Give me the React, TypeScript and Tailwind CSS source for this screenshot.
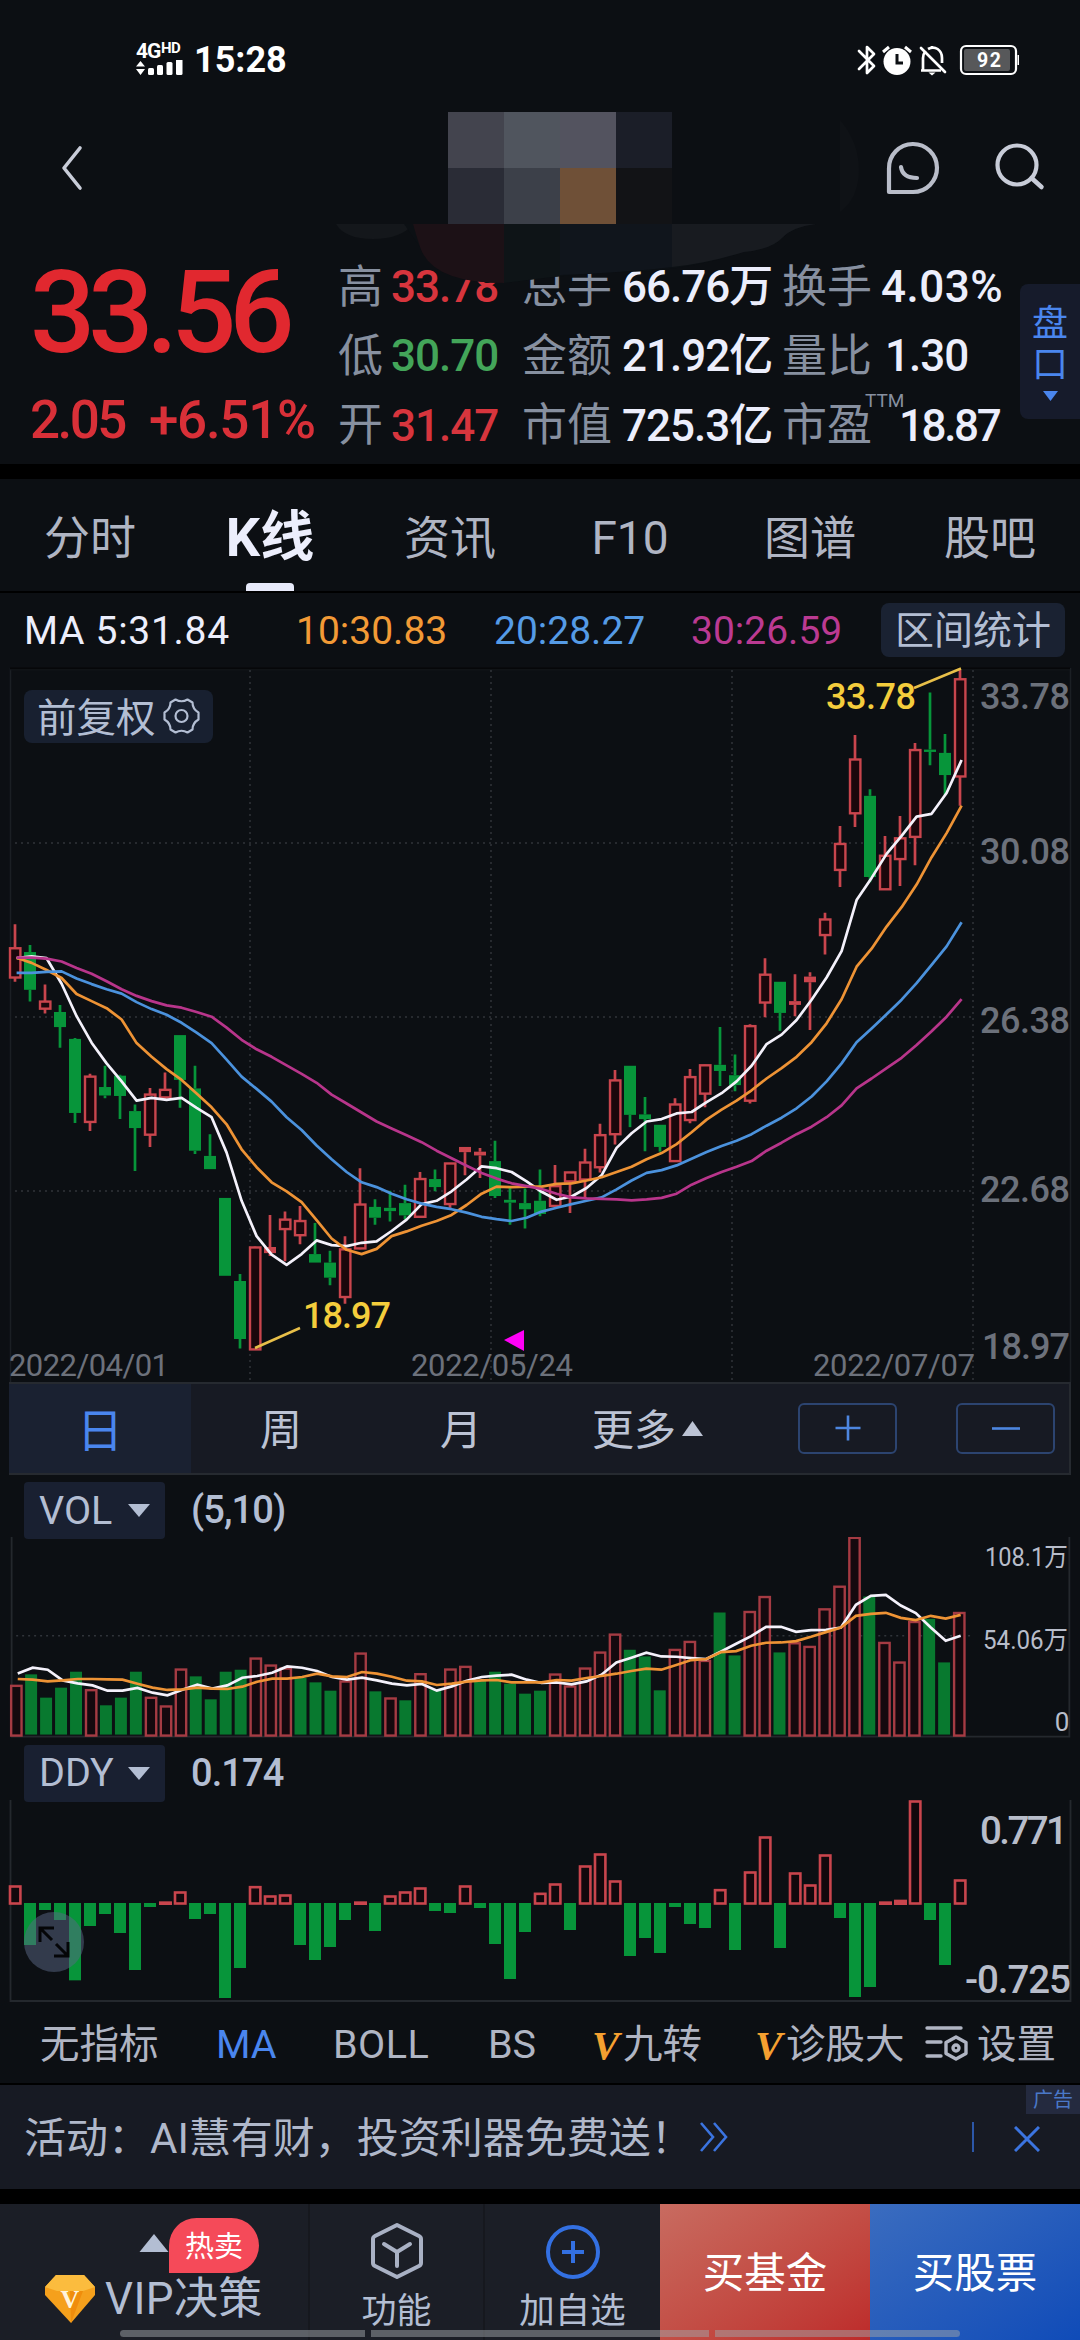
import type { ReactNode } from "react";

/* ---------- market data, in chart ticks ---------- */

type Candle = [tone: "r" | "g", high: number, top: number, bottom: number, low: number];

const candles: Candle[] = [
  ["r", 581, 632, 694, 703], ["g", 625, 640, 720, 745], ["r", 709, 745, 760, 770], ["g", 752, 767, 799, 843],
  ["g", 822, 824, 981, 1002], ["r", 898, 904, 1000, 1019], ["g", 881, 926, 944, 950], ["g", 900, 902, 945, 994],
  ["g", 963, 977, 1013, 1104], ["r", 928, 942, 1027, 1053], ["r", 895, 932, 948, 953], ["g", 816, 816, 911, 970],
  ["g", 881, 929, 1061, 1068], ["g", 1026, 1072, 1100, 1100], ["g", 1161, 1161, 1326, 1326], ["g", 1322, 1337, 1460, 1480],
  ["r", 1264, 1266, 1482, 1482], ["r", 1197, 1265, 1278, 1284], ["r", 1190, 1207, 1227, 1295], ["r", 1178, 1210, 1240, 1259],
  ["g", 1214, 1280, 1298, 1298], ["g", 1273, 1298, 1330, 1346], ["r", 1242, 1270, 1371, 1385], ["r", 1098, 1175, 1268, 1270],
  ["g", 1164, 1180, 1203, 1218], ["g", 1146, 1182, 1189, 1211], ["g", 1133, 1172, 1198, 1206], ["r", 1106, 1121, 1201, 1201],
  ["g", 1101, 1121, 1138, 1147], ["r", 1088, 1088, 1174, 1182], ["r", 1053, 1053, 1064, 1113], ["r", 1055, 1063, 1071, 1119],
  ["g", 1040, 1083, 1157, 1161], ["g", 1136, 1165, 1171, 1218], ["g", 1141, 1172, 1185, 1226], ["g", 1101, 1167, 1195, 1200],
  ["r", 1091, 1136, 1178, 1180], ["r", 1107, 1107, 1126, 1193], ["r", 1057, 1086, 1122, 1163], ["r", 1004, 1028, 1096, 1107],
  ["r", 890, 912, 1026, 1048], ["g", 881, 881, 985, 1011], ["g", 947, 984, 994, 1062], ["g", 1006, 1006, 1053, 1063],
  ["r", 950, 963, 1083, 1084], ["r", 888, 905, 996, 1003], ["r", 879, 880, 940, 969], ["g", 799, 879, 892, 924],
  ["g", 857, 901, 922, 935], ["r", 793, 797, 955, 961], ["r", 653, 688, 747, 778], ["g", 703, 703, 769, 807],
  ["r", 687, 744, 752, 776], ["r", 683, 692, 704, 805], ["r", 557, 571, 604, 645], ["r", 373, 411, 466, 502],
  ["r", 180, 232, 346, 375], ["g", 295, 309, 481, 492], ["r", 394, 436, 507, 508], ["r", 352, 399, 443, 500],
  ["r", 197, 212, 396, 456], ["g", 90, 211, 216, 244], ["g", 178, 218, 265, 307], ["r", 42, 62, 268, 330],
];

const ma5 = [653, 649, 653, 707, 776, 832, 876, 914, 955, 949, 953, 949, 970, 990, 1065, 1167, 1242, 1281, 1303, 1280, 1251, 1261, 1263, 1256, 1253, 1231, 1207, 1174, 1167, 1147, 1122, 1094, 1098, 1106, 1126, 1148, 1165, 1158, 1140, 1113, 1055, 1024, 999, 994, 982, 979, 958, 939, 914, 881, 835, 815, 784, 741, 694, 638, 530, 483, 432, 394, 353, 347, 303, 233];
const ma10 = [652, 663, 678, 695, 729, 744, 759, 783, 833, 862, 888, 911, 940, 969, 1005, 1058, 1096, 1128, 1147, 1170, 1208, 1247, 1271, 1280, 1269, 1242, 1232, 1220, 1210, 1197, 1176, 1152, 1137, 1138, 1137, 1137, 1131, 1130, 1124, 1117, 1106, 1095, 1079, 1066, 1047, 1022, 995, 974, 955, 933, 908, 886, 862, 831, 791, 740, 671, 633, 586, 545, 497, 439, 388, 330];
const ma20 = [684, 684, 682, 681, 696, 708, 719, 728, 746, 761, 773, 790, 811, 833, 868, 904, 930, 957, 990, 1017, 1050, 1079, 1106, 1128, 1138, 1152, 1164, 1173, 1180, 1185, 1192, 1201, 1206, 1210, 1203, 1190, 1182, 1174, 1167, 1160, 1143, 1124, 1108, 1102, 1092, 1078, 1064, 1051, 1040, 1026, 1008, 991, 971, 946, 914, 876, 831, 802, 772, 741, 706, 667, 628, 577];
const ma30 = [652, 652, 654, 660, 674, 686, 702, 719, 733, 744, 753, 758, 767, 777, 800, 826, 846, 862, 880, 898, 917, 942, 961, 980, 999, 1014, 1028, 1043, 1061, 1077, 1093, 1108, 1120, 1130, 1136, 1142, 1152, 1160, 1162, 1163, 1164, 1166, 1164, 1161, 1152, 1133, 1119, 1106, 1095, 1083, 1061, 1044, 1026, 1010, 990, 965, 929, 908, 886, 864, 837, 808, 777, 740];

const volTones = "rggggrgggrrrggggrrrgggrrgrgrgrrgggggrrrrrgggrrrggrrgrrrrrgrrrggr";
const volTops = [560, 527, 597, 567, 519, 573, 620, 597, 519, 596, 622, 511, 533, 602, 519, 513, 478, 499, 508, 538, 551, 576, 547, 463, 578, 598, 605, 525, 572, 511, 503, 547, 519, 555, 585, 576, 526, 562, 508, 460, 406, 453, 473, 575, 452, 428, 485, 341, 470, 338, 293, 461, 432, 443, 330, 262, 115, 293, 431, 490, 368, 360, 491, 341];
const volMa5 = [524, 507, 513, 545, 554, 560, 576, 576, 568, 582, 590, 573, 558, 570, 560, 537, 532, 522, 503, 507, 517, 535, 543, 537, 545, 555, 560, 556, 576, 563, 546, 535, 531, 528, 543, 553, 551, 557, 548, 528, 491, 477, 462, 473, 474, 478, 481, 458, 435, 412, 384, 384, 399, 394, 393, 386, 318, 291, 288, 320, 343, 386, 426, 411];
const volMa10 = [541, 543, 548, 545, 541, 541, 542, 543, 555, 567, 574, 572, 567, 570, 571, 564, 549, 540, 540, 535, 525, 533, 535, 520, 525, 534, 546, 548, 559, 555, 549, 545, 544, 551, 551, 551, 544, 546, 538, 532, 525, 517, 510, 513, 499, 484, 481, 460, 457, 441, 432, 431, 427, 414, 400, 386, 351, 345, 342, 357, 364, 351, 359, 348];

/* positive values rise above the zero line, negative ones hang below it */
const ddy = [51, -126, -21, -51, -232, -69, -33, -90, -201, -12, 8, 33, -48, -33, -285, -195, 49, 21, 24, -126, -171, -132, -51, 8, -84, 21, 33, 45, -24, -30, 51, -15, -123, -228, -87, 29, 57, -81, 111, 147, 66, -159, -105, -150, -12, -63, -75, 40, -141, 93, 198, -135, 90, 54, 144, -45, -282, -252, 8, 13, 306, -51, -186, 69];

const cx = (i: number) => 15 + 15 * i;
const path = (values: number[], y: (v: number) => number) =>
  values.map((v, i) => `${i ? "L" : "M"}${(16.6 + i * 15).toFixed(1)} ${y(v).toFixed(1)}`).join("");

const RED = "#c9454d";
const GREEN = "#07953a";
const GRID = "#30343a";

const TriangleDown = () => (
  <svg width="22" height="13" viewBox="0 0 22 13"><path d="M0 0h22L11 13z" fill="#b3bed3" /></svg>
);

/* ---------- status bar and header ---------- */

function StatusBar() {
  return (
    <div className="flex h-[112px] items-center pt-2 text-white">
      <div className="ml-[136px] flex h-[34px] w-[47px] flex-col">
        <div className="flex h-[17px] items-start font-bold leading-none">
          <span className="w-[25px] text-[21px] leading-[17px] tracking-[-1px]">4G</span>
          <span className="text-[15px] leading-[10px] tracking-[-0.5px]">HD</span>
        </div>
        <svg width="47" height="17" viewBox="0 0 47 17" fill="#fff">
          <path d="M0 6.500L4.500 1l4.500 5.500zM0 9h9l-4.500 6z" />
          <rect x="12" y="8" width="6" height="7" rx="1.500" />
          <rect x="21" y="5" width="6" height="10" rx="1.500" />
          <rect x="30.500" y="2" width="6" height="13" rx="1.500" />
          <rect x="40" y="-1" width="6.500" height="16" rx="1.500" />
        </svg>
      </div>
      <div className="ml-[11px] flex-1 text-[36px] font-bold leading-none">15:28</div>
      <svg width="162" height="34" viewBox="857 43 162 34" className="mr-[61px]" fill="none" stroke="#fff">
        <path d="M859 51l15 15-7 7V47l7 7-15 15" strokeWidth="2.700" strokeLinejoin="round" strokeLinecap="round" />
        <circle cx="897" cy="61.500" r="13.500" fill="#fff" stroke="none" />
        <path d="M883 52l6-5M911 52l-6-5" strokeWidth="3" />
        <path d="M897 54v9h6" stroke="#0c0f13" strokeWidth="3" />
        <path d="M923 70V58c0-3 1-5 2.500-7M928 49c7-4 14 1 14 9v5M921 70.500h20M932 46v2" strokeWidth="2.700" />
        <path d="M921 48l24 24" strokeWidth="2.700" strokeLinecap="round" />
        <path d="M928.500 72.500h7l-3.500 3z" fill="#fff" stroke="none" />
        <rect x="961" y="46" width="55" height="28" rx="5" strokeWidth="2.200" />
        <rect x="964" y="49" width="46" height="22" rx="2" fill="#57585a" stroke="none" />
        <path d="M1018.500 55v10" strokeWidth="2" />
        <text x="977" y="67" fontSize="19.500" fontWeight="700" fill="#fff" stroke="none" textLength="24">92</text>
      </svg>
    </div>
  );
}

const mosaic = ["bg-[#43444e]", "bg-[#50555e]", "bg-[#53535f]", "bg-[#1b1e28]", "bg-[#2a2c36]", "bg-[#3c4049]", "bg-[#6f5037]", "bg-[#121316]"];

function Header() {
  return (
    <div className="relative z-10 flex h-[138px] items-start">
      <svg width="24" height="46" viewBox="0 0 24 46" className="ml-[60px] mt-[33px]" fill="none" stroke="#c8ccd8" strokeWidth="3.600" strokeLinecap="round" strokeLinejoin="round">
        <path d="M20 3L4 23l16 20" />
      </svg>
      <div className="ml-[364px] grid w-[224px] grid-cols-4">
        {mosaic.map((c) => <div key={c} className={`h-14 ${c}`} />)}
      </div>
      <svg width="374" height="100" viewBox="672 112 374 100" fill="none">
        <path d="M840 120q19 22 19 50t-19 42z" fill="#0f1216" />
        <g stroke="#b9bdc9" strokeWidth="4.200" strokeLinejoin="round" strokeLinecap="round">
          <path d="M889 192V168.500a24 24 0 1 1 24 23.500z" />
          <path d="M901 167c1 7 6 11 16 11" />
        </g>
        <circle cx="1017" cy="165" r="19.500" stroke="#c8ccd8" strokeWidth="4.200" />
        <path d="M1031.500 178l10 9" stroke="#c8ccd8" strokeWidth="4.500" strokeLinecap="round" />
      </svg>
      <svg width="480" height="66" viewBox="336 224 480 66" className="absolute left-[336px] top-[112px]">
        <path d="M336 224h77q-12 15-40 15t-37-15z" fill="#14171b" />
        <path d="M404 224h412q-24 3-34 14t-38 14q-60 20-124 20-60 3-116 11-70 0-84-36z" fill="#0c1014" />
        <path d="M413 224h91v59q-72 0-84-36-4-12-7-23z" fill="#1c1116" />
        <path d="M504 224h56v52l-56 7z" fill="#0e1417" />
        <path d="M560 224h112v43q-40 5-112 8z" fill="#10151c" />
        <path d="M672 224h144q-24 3-34 14t-38 14q-40 12-72 15z" fill="#181b20" />
      </svg>
    </div>
  );
}

/* ---------- quote ---------- */

const Metric = ({ label, value, tone, className = "", labelWidth }: { label: string; value: ReactNode; tone: string; className?: string; labelWidth: string }) => (
  <div className={`flex items-center whitespace-nowrap ${className}`}>
    <span className={`text-[45px] text-[#8790a0] ${labelWidth}`}>{label}</span>
    <span className={`text-[44px] font-medium ${tone}`}>{value}</span>
  </div>
);

function Quote() {
  const white = "tracking-[-1px] text-[#eceefc]";
  return (
    <div className="flex h-[215px]">
      <div className="w-[338px] shrink-0 whitespace-nowrap text-[#e1282f]">
        <div className="mt-[5px] h-[118px] pl-[30px] text-[115px] font-medium leading-[118px] tracking-[-7.200px]">33.56</div>
        <div className="flex pl-[30px] pt-[20px] text-[53px] font-medium leading-[56px] tracking-[-2.600px] text-[#d93038]">
          <span className="w-[119px]">2.05</span><span className="tracking-[-1.300px]">+6.51%</span>
        </div>
      </div>
      <div className="mt-[3px] grid h-[208px] w-[682px] shrink-0 grid-cols-[184px_260px_238px] grid-rows-3 leading-none">
        <Metric labelWidth="w-[53px]" label="高" value="33.78" tone="tracking-[-1px] text-[#d7353d]" />
        <Metric labelWidth="w-[100px]" label="总手" value="66.76万" tone={white} />
        <Metric labelWidth="w-[99px]" label="换手" value="4.03%" tone="tracking-[0.500px] text-[#eceefc]" />
        <Metric labelWidth="w-[53px]" label="低" value="30.70" tone="tracking-[-1px] text-[#43a559]" />
        <Metric labelWidth="w-[100px]" label="金额" value="21.92亿" tone={white} />
        <Metric labelWidth="w-[103px]" label="量比" value="1.30" tone={white} />
        <Metric labelWidth="w-[53px]" label="开" value="31.47" tone="tracking-[-1px] text-[#d7353d]" />
        <Metric labelWidth="w-[100px]" label="市值" value="725.3亿" tone={white} />
        <div className="relative">
          <Metric className="h-full" labelWidth="w-[117px]" label="市盈" value="18.87" tone="tracking-[-2.400px] text-[#eceefc]" />
          <span className="absolute left-[83px] top-0 text-[19px] text-[#8790a0]">TTM</span>
        </div>
      </div>
      <div className="mt-[35px] flex h-[135px] w-[60px] flex-col items-center rounded-l-lg bg-[#161b2b] pt-[20px] text-[36px] leading-[41px] text-[#4a86ee]">
        <span>盘</span><span>口</span>
        <svg width="15" height="10" viewBox="0 0 15 10" className="mt-[5px]"><path d="M0 0h15L7.500 10z" fill="#4a86ee" /></svg>
      </div>
    </div>
  );
}

/* ---------- tabs ---------- */

const tabs = ["分时", "K线", "资讯", "F10", "图谱", "股吧"];

const Tabs = () => (
  <div className="grid h-[114px] grid-cols-6 border-b-2 border-black text-[46px] leading-none text-[#b0b5c3]">
    {tabs.map((t) => (
      <div key={t} className="relative flex items-center justify-center pt-[7px]">
        <span className={t === "K线" ? "text-[54px] font-bold text-[#eceefc]" : ""}>{t}</span>
        {t === "K线" && <span className="absolute bottom-0 h-2 w-12 rounded-t-sm bg-[#e8eafa]" />}
      </div>
    ))}
  </div>
);

const Averages = () => (
  <div className="flex h-[73px] items-center whitespace-nowrap pt-px text-[39px] leading-none">
    <span className="ml-[24px] w-[272px] pt-1 tracking-[0.700px] text-[#eceefc]">MA 5:31.84</span>
    <span className="w-[198px] pt-1 text-[#f29a36]">10:30.83</span>
    <span className="w-[197px] pt-1 text-[#559be6]">20:28.27</span>
    <span className="w-[190px] pt-1 text-[#bb3a92]">30:26.59</span>
    <span className="flex h-[54px] w-[184px] items-center justify-center rounded-lg bg-[#1a2232] pt-1 text-[39px] text-[#b3bed3]">区间统计</span>
  </div>
);

/* ---------- candlestick chart ---------- */

const ky = (v: number) => (v * 740) / 1568 - 16;

function KChart() {
  return (
    <div className="relative h-[716px]">
      <svg width="1080" height="716" viewBox="0 0 1080 716" className="block">
        <g stroke={GRID} strokeWidth="1.500" fill="none">
          <path d="M10.500 2V716M1070.500 2V716" stroke="#1b1f24" />
          <path d="M10 2.500H1070" stroke="#060709" strokeWidth="2" />
          <path d="M10 3.800H1070" stroke="#15181c" strokeWidth="1" />
          <path d="M15 177H973M15 351H973M15 525H973" strokeDasharray="2 4" />
          <path d="M250 4V716M491 4V716M732 4V716M973 4V716" strokeDasharray="2 4" />
        </g>
        {candles.map(([tone, high, top, bottom, low], i) => {
          const t = ky(top);
          const h = Math.max(ky(bottom) - t, 2);
          const x = cx(i);
          const c = tone === "r" ? RED : GREEN;
          const hollow = tone === "r" && h > 7;
          return (
            <g key={i}>
              <path d={`M${x} ${ky(high)}V${t}M${x} ${t + h}V${ky(low)}`} stroke={c} strokeWidth="2.700" />
              {hollow ? (
                <rect x={x - 5} y={t} width="10.400" height={h} fill="#1b070c" stroke={c} strokeWidth="2.400" />
              ) : (
                <rect x={x - 6} y={t} width="12" height={h} fill={c} />
              )}
            </g>
          );
        })}
        <g fill="none" strokeWidth="2.700" strokeLinejoin="round">
          <path d={path(ma5, ky)} stroke="#f4f1fb" />
          <path d={path(ma10, ky)} stroke="#ee9335" />
          <path d={path(ma20, ky)} stroke="#4b92dd" />
          <path d={path(ma30, ky)} stroke="#b8358b" />
        </g>
        <path d="M914 22L961 2.500M255 682L300 662" stroke="#e8bf49" strokeWidth="2.500" fill="none" />
        <path d="M504 674l20-10v21z" fill="#ff00f6" />
        <g fontSize="36" fontWeight="500">
          <text x="826" y="43" fill="#f4cd3c" textLength="90">33.78</text>
          <text x="303" y="662" fill="#f4cd3c" textLength="88">18.97</text>
          <g fill="#6c717b">
            <text x="980" y="43" textLength="90">33.78</text>
            <text x="980" y="197.500" textLength="90">30.08</text>
            <text x="980" y="366.500" textLength="90">26.38</text>
            <text x="980" y="535.500" textLength="90">22.68</text>
            <text x="982" y="693" textLength="88">18.97</text>
          </g>
        </g>
        <g fontSize="31" fill="#6c717b">
          <text x="9" y="709.500" textLength="160">2022/04/01</text>
          <text x="411" y="709.500" textLength="162">2022/05/24</text>
          <text x="813" y="709.500" textLength="162">2022/07/07</text>
        </g>
      </svg>
      <div className="absolute left-6 top-[24px] flex h-[53px] w-[189px] items-center rounded-lg bg-[#182030] pl-[13px] text-[39.500px] leading-none text-[#b3bed3]">
        <span className="w-[126px] pt-[5px]">前复权</span>
        <svg width="37" height="38" viewBox="-18.500 -19 37 38" fill="none" stroke="#b3bed3" strokeWidth="2.200" strokeLinejoin="round">
          <path d="M-6 -16.500Q0 -13 6 -16.500L11 -13.500Q11 -7 17 -3.500V3.500Q11 7 11 13.500L6 16.500Q0 13 -6 16.500L-11 13.500Q-11 7 -17 3.500V-3.500Q-11 -7 -11 -13.500z" />
          <circle r="6" />
        </svg>
      </div>
    </div>
  );
}

const ZoomKey = ({ children }: { children: ReactNode }) => (
  <span className="flex h-[51px] w-[99px] items-center justify-center rounded-md border-2 border-[#2c4470]">
    <svg width="28" height="28" viewBox="0 0 28 28" stroke="#4d86e0" strokeWidth="2.600">{children}</svg>
  </span>
);

const Periods = () => (
  <div className="mx-[9px] flex h-[94px] items-center border-y-2 border-r-2 border-[#262a30] bg-[#171a23] text-[42px] leading-none text-[#bcc3d4]">
    <span className="flex h-full w-[182px] items-center justify-center bg-[#1a2131] pt-1.5 text-[46px] text-[#4a86ee]">日</span>
    <span className="w-[180px] pt-1.5 text-center">周</span>
    <span className="w-[180px] pt-1.5 text-center">月</span>
    <span className="ml-[41px] flex w-[206px] items-center">
      <span className="pt-1.5">更多</span>
      <svg width="21" height="15" viewBox="0 0 21 15" className="ml-1.5"><path d="M10.500 0L21 15H0z" fill="#bcc3d4" /></svg>
    </span>
    <ZoomKey><path d="M14 1.500v25M1.500 14h25" /></ZoomKey>
    <span className="w-[59px]" />
    <ZoomKey><path d="M0 14.500h28" /></ZoomKey>
  </div>
);

/* ---------- sub charts ---------- */

const SubHeader = ({ name, value }: { name: string; value: string }) => (
  <div className="flex h-[62px] items-end whitespace-nowrap text-[38px] leading-none text-[#b3bed3]">
    <span className="relative z-10 -mb-0.5 ml-6 flex h-[57px] w-[141px] items-center justify-between rounded bg-[#192031] pl-[15px] pr-[15px] text-[39.500px]">
      {name}<TriangleDown />
    </span>
    <span className="mb-[8px] ml-[26px] font-medium tracking-[-0.900px]">{value}</span>
  </div>
);

const vy = (v: number) => (v - 114) / 3;

const VolumeChart = () => (
  <svg width="1080" height="201" viewBox="0 0 1080 201" className="block">
    <path d="M10.500 0V200H1070.500V0" stroke="#24282d" strokeWidth="1.800" fill="none" />
    <path d="M15 99H973" stroke={GRID} strokeWidth="1.500" strokeDasharray="2 4" />
    {volTops.map((v, i) =>
      volTones[i] === "r" ? (
        <rect key={i} x={cx(i) - 5} y={vy(v) + 0.5} width="10.400" height={198.5 - vy(v)} fill="#14090e" stroke="#a53b43" strokeWidth="2.400" />
      ) : (
        <rect key={i} x={cx(i) - 6} y={vy(v)} width="12" height={198 - vy(v)} fill="#08792f" />
      ),
    )}
    <g fill="none" strokeWidth="2.700">
      <path d={path(volMa5, vy)} stroke="#f4f1fb" />
      <path d={path(volMa10, vy)} stroke="#ee9335" />
    </g>
    <g fontSize="26" fill="#b8bdca">
      <text x="986" y="29" textLength="83" lengthAdjust="spacingAndGlyphs">108.1万</text>
      <text x="984" y="112" textLength="85" lengthAdjust="spacingAndGlyphs">54.06万</text>
      <text x="1056" y="194">0</text>
    </g>
  </svg>
);

const DdyChart = () => (
  <div className="relative h-[202px]">
    <svg width="1080" height="202" viewBox="0 0 1080 202" className="block">
      <path d="M10.500 0V201H1070.500V0" stroke="#24282d" strokeWidth="1.800" fill="none" />
      {ddy.map((v, i) =>
        v < 0 ? (
          <rect key={i} x={cx(i) - 6} y="103" width="12" height={-v / 3} fill={GREEN} />
        ) : v < 15 ? (
          <rect key={i} x={cx(i) - 6} y={104 - v / 3} width="13" height={v / 3 + 1} fill={RED} />
        ) : (
          <rect key={i} x={cx(i) - 5} y={103.5 - v / 3} width="10.400" height={v / 3} fill="#12080c" stroke={RED} strokeWidth="2.600" />
        ),
      )}
      <g fontSize="38.500" fill="#b8bdca" fontWeight="500">
        <text x="980" y="43.500" textLength="88">0.771</text>
        <text x="965" y="193" textLength="106">-0.725</text>
      </g>
    </svg>
    <span className="absolute left-6 top-[112px] flex size-[60px] items-center justify-center rounded-full bg-[#5a6886]/50">
      <svg width="32" height="32" viewBox="0 0 32 32" fill="none" stroke="#050608" strokeWidth="3">
        <path d="M2 16V2h14M2 2l12 12M30 16v14H16M30 30L18 18" />
      </svg>
    </span>
  </div>
);

/* ---------- indicators and banner ---------- */

const V = () => <span className="inline-block w-[31px] font-['Liberation_Serif'] text-[41px] font-bold italic text-[#f5a030]">V</span>;

const Indicators = () => (
  <div className="flex h-[83px] items-center whitespace-nowrap border-b-2 border-black pt-1.5 text-[39.500px] leading-none text-[#b0b5c3]">
    <span className="ml-10 w-[176px]">无指标</span>
    <span className="w-[117px] text-[#4a86ee]">MA</span>
    <span className="w-[155px] tracking-[0.500px]">BOLL</span>
    <span className="w-[104px]">BS</span>
    <span className="flex w-[163px] items-center"><V />九转</span>
    <span className="flex w-[168px] items-center"><V />诊股大</span>
    <svg width="44" height="36" viewBox="0 0 44 36" fill="none" stroke="#b0b5c3" strokeWidth="3.400" strokeLinecap="round" className="mb-1 ml-0.5">
      <path d="M2 3h34M2 17h14M2 31h14" />
      <path d="M31 12l10 5.500v11L31 34l-10-5.500v-11z" strokeLinejoin="round" />
      <circle cx="31" cy="23" r="3" />
    </svg>
    <span className="ml-[8px]">设置</span>
  </div>
);

const Banner = () => (
  <div className="relative flex h-[105px] items-center bg-[#171a23] text-[42px] leading-none text-[#b0b8ca]">
    <span className="ml-6 w-[675px] whitespace-nowrap pt-[5px]">活动：AI慧有财，投资利器免费送！</span>
    <svg width="30" height="30" viewBox="0 0 30 30" fill="none" stroke="#3b74e0" strokeWidth="2.600">
      <path d="M2 1l12 14L2 29M15 1l12 14-12 14" />
    </svg>
    <span className="ml-[243px] h-[30px] w-0.5 bg-[#2c57a8]" />
    <svg width="26" height="26" viewBox="0 0 26 26" stroke="#3b74e0" strokeWidth="3" className="ml-[40px] mt-1">
      <path d="M1 1l24 24M25 1L1 25" />
    </svg>
    <span className="absolute right-0 top-0 flex h-[29px] w-[54px] items-center justify-center bg-[#242a3f] pt-0.5 text-[20px] text-[#4a78c8]">广告</span>
  </div>
);

/* ---------- bottom bar ---------- */

const BottomBar = () => (
  <div className="relative flex h-[136px] bg-[#1b1e26] leading-none text-[#b3bed3]">
    <div className="w-[308px]">
      <div className="flex h-[55px] pl-[139px] pt-[14px]">
        <svg width="30" height="18" viewBox="0 0 30 18" className="mt-4"><path d="M15 0l14.500 18H.5z" fill="#b3bed3" /></svg>
        <span className="flex h-[55px] w-[90px] shrink-0 items-center justify-center rounded-t-[28px] rounded-br-[28px] bg-[#f54a59] pt-1 text-[29px] text-white">热卖</span>
      </div>
      <div className="flex items-center whitespace-nowrap pl-[45px] pt-[16px] text-[44px]">
        <svg width="50" height="48" viewBox="0 0 50 48" className="mr-[10px]">
          <path d="M11 0h28l11 12v8L26 48 0 20v-8z" fill="#f5a01c" />
          <path d="M11 0h28l11 12-12 4H12L0 12z" fill="#fbbc3e" />
          <path d="M25 16h13L26 48z" fill="#f08d0c" />
          <text x="25" y="33" fontSize="26" fontWeight="700" fontFamily="Liberation Serif" textAnchor="middle" fill="#fff4dc">V</text>
        </svg>
        <span className="tracking-[0.400px]">VIP决策</span>
      </div>
    </div>
    <div className="flex w-[175px] flex-col items-center border-l-2 border-[#16181e] pt-[18px] text-[35px]">
      <svg width="54" height="58" viewBox="0 0 54 58" fill="none" stroke="#a9b1c4" strokeWidth="4" strokeLinejoin="round" strokeLinecap="round">
        <path d="M27 3l22 11q2 1 2 3v24q0 2-2 3L27 55 5 44q-2-1-2-3V17q0-2 2-3z" />
        <path d="M14 22l13 8 13-8M27 30v14" />
      </svg>
      <span className="mt-[14px]">功能</span>
    </div>
    <div className="flex w-[177px] flex-col items-center border-l-2 border-[#16181e] pt-[18px] text-[35.500px]">
      <svg width="58" height="58" viewBox="0 0 58 58" fill="none" stroke="#3370e2" strokeWidth="4">
        <circle cx="29" cy="30" r="25" />
        <path d="M29 19v22M18 30h22" />
      </svg>
      <span className="mt-[14px]">加自选</span>
    </div>
    <div className="flex w-[210px] items-center justify-center bg-linear-to-br from-[#c86b60] to-[#bd2a2a] pt-1 text-[41.500px] text-white">买基金</div>
    <div className="flex w-[210px] items-center justify-center bg-linear-to-br from-[#3a6cbf] to-[#0f4bb8] pt-1 text-[41.500px] text-white">买股票</div>
    <div className="absolute bottom-[3px] left-[120px] flex h-[7px] gap-1.5">
      <span className="w-[245px] rounded-l-full bg-[#a0a4a8]/50" />
      <span className="w-[338px] bg-[#a0a4a8]/50" />
      <span className="w-[245px] rounded-r-full bg-[#a0a4a8]/50" />
    </div>
  </div>
);

export default function App() {
  return (
    <div className="flex h-[2340px] w-[1080px] flex-col overflow-hidden bg-[#0c0f13] font-['Roboto','Noto_Sans_CJK_SC',sans-serif]">
      <StatusBar />
      <Header />
      <Quote />
      <div className="h-[15px] bg-black" />
      <Tabs />
      <Averages />
      <KChart />
      <Periods />
      <SubHeader name="VOL" value="(5,10)" />
      <VolumeChart />
      <SubHeader name="DDY" value="0.174" />
      <DdyChart />
      <Indicators />
      <Banner />
      <div className="h-[15px] shrink-0 bg-black" />
      <BottomBar />
    </div>
  );
}
